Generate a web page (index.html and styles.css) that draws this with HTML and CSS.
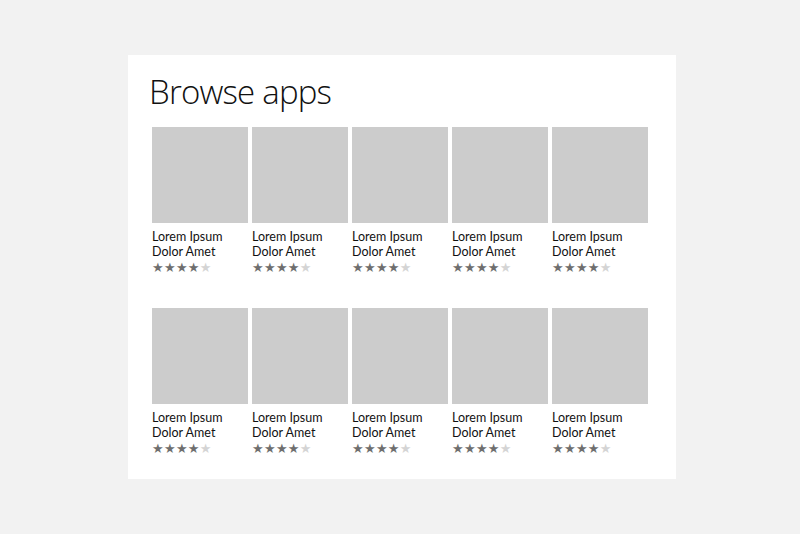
FILE: index.html
```html
<!DOCTYPE html>
<html lang="en">
    <head>
        <meta charset="utf-8">
        <meta name="viewport" content="width=device-width, initial-scale=1.0">
        <title>Browse apps</title>
        <link rel="stylesheet" href="styles.css">
    </head>
    <body>
        <div class="panel"> <!-- white card with the title and two rows of apps. -->
            <h1 class="title">Browse apps</h1>
            <div class="row">
                <div class="app"><div class="thumb"></div><p class="name">Lorem Ipsum</p><p class="name">Dolor Amet</p><div class="stars">★★★★<span class="off">★</span></div></div>
                <div class="app"><div class="thumb"></div><p class="name">Lorem Ipsum</p><p class="name">Dolor Amet</p><div class="stars">★★★★<span class="off">★</span></div></div>
                <div class="app"><div class="thumb"></div><p class="name">Lorem Ipsum</p><p class="name">Dolor Amet</p><div class="stars">★★★★<span class="off">★</span></div></div>
                <div class="app"><div class="thumb"></div><p class="name">Lorem Ipsum</p><p class="name">Dolor Amet</p><div class="stars">★★★★<span class="off">★</span></div></div>
                <div class="app"><div class="thumb"></div><p class="name">Lorem Ipsum</p><p class="name">Dolor Amet</p><div class="stars">★★★★<span class="off">★</span></div></div>
            </div>
            <div class="row">
                <div class="app"><div class="thumb"></div><p class="name">Lorem Ipsum</p><p class="name">Dolor Amet</p><div class="stars">★★★★<span class="off">★</span></div></div>
                <div class="app"><div class="thumb"></div><p class="name">Lorem Ipsum</p><p class="name">Dolor Amet</p><div class="stars">★★★★<span class="off">★</span></div></div>
                <div class="app"><div class="thumb"></div><p class="name">Lorem Ipsum</p><p class="name">Dolor Amet</p><div class="stars">★★★★<span class="off">★</span></div></div>
                <div class="app"><div class="thumb"></div><p class="name">Lorem Ipsum</p><p class="name">Dolor Amet</p><div class="stars">★★★★<span class="off">★</span></div></div>
                <div class="app"><div class="thumb"></div><p class="name">Lorem Ipsum</p><p class="name">Dolor Amet</p><div class="stars">★★★★<span class="off">★</span></div></div>
            </div>
        </div>
    </body>
</html>
```

FILE: styles.css
```css
*{
    margin: 0;
    padding: 0;
    box-sizing: border-box;
}
body{
    background-color: #f2f2f2;
    padding: 55px 0 0 128px; /* card sits a little left of center. */
    font-family: "Open Sans", "Noto Sans", sans-serif;
    color: #1a1a1a;
}
.panel{
    width: 548px;
    height: 424px;
    background-color: #fff;
    padding: 15px 0 0 24px;
}
.title{
    font-size: 33px;
    font-weight: 300;
    line-height: 44px;
    letter-spacing: -0.8px;
    margin-left: -3px;
    margin-bottom: 13px;
    color: #111;
}
.row{
    display: flex;
    gap: 4px;
    margin-bottom: 32px;
}
.app{
    width: 96px;
}
.thumb{
    width: 96px;
    height: 96px;
    background-color: #cccccc;
}
.name{
    font-family: Lato, "Open Sans", sans-serif;
    font-size: 12.5px;
    line-height: 15px;
    color: #111;
}
.thumb + .name{
    margin-top: 6px;
}
.stars{
    font-family: "DejaVu Sans", sans-serif;
    font-size: 13px;
    line-height: 16px;
    margin-top: 1px;
    color: #6e6e6e;
    letter-spacing: 0.3px;
}
.stars .off{
    color: #d4d4d4;
}
```
